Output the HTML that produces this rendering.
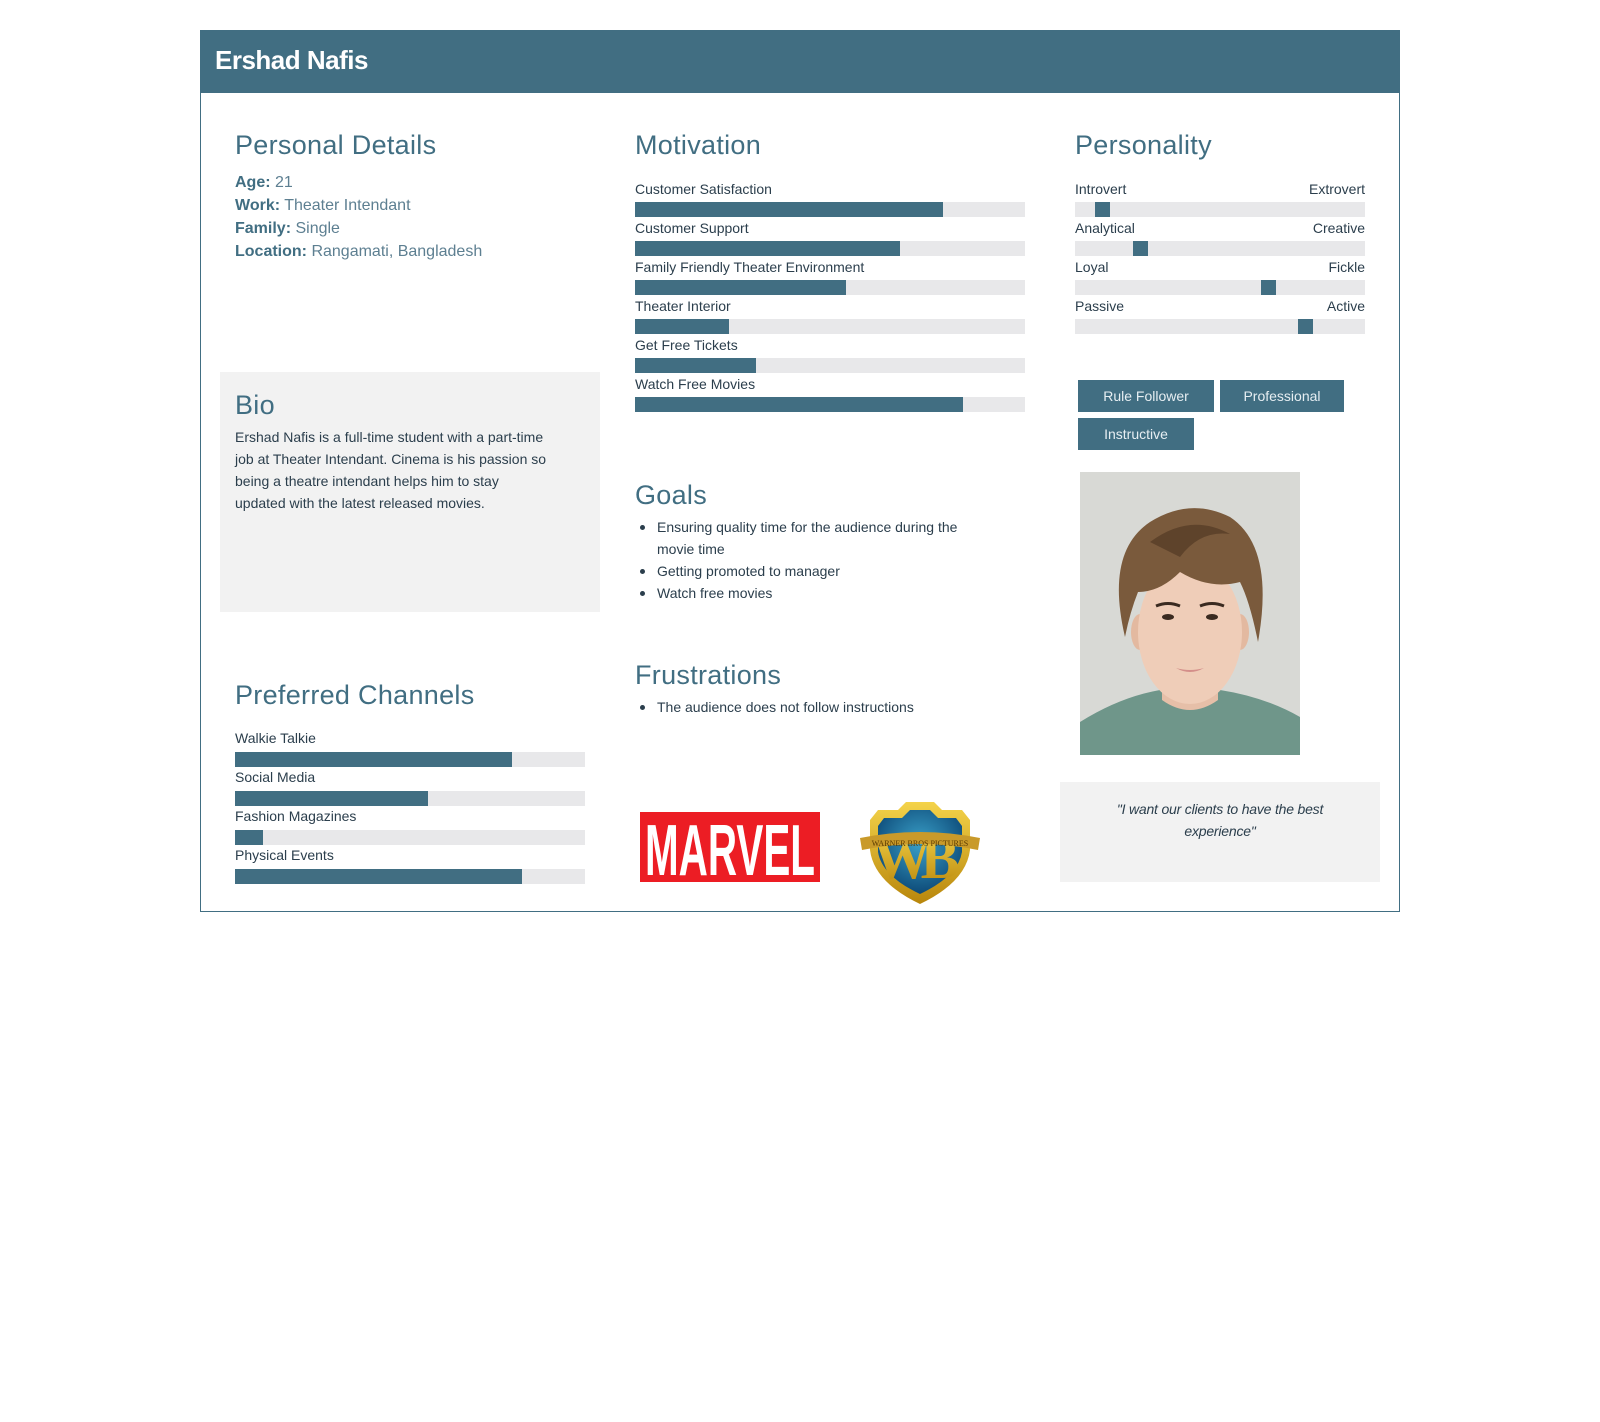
<!DOCTYPE html>
<html><head><meta charset="utf-8"><style>
*{margin:0;padding:0;box-sizing:border-box}
body{width:1600px;height:1422px;background:#fff;font-family:"Liberation Sans",sans-serif;color:#2b3e4c;position:relative;overflow:hidden}
.a{position:absolute}
.card{left:200px;top:30px;width:1200px;height:882px;border:1px solid #416e82}
.hdr{left:200px;top:30px;width:1200px;height:63px;background:#416e82;color:#fff;font-size:26px;font-weight:bold;padding:15px 0 0 15px;letter-spacing:-0.5px}
h2{position:absolute;font-weight:normal;color:#416e82;font-size:27px;letter-spacing:0.3px}
.pd{font-size:16px;line-height:23px;color:#5d7f91}
.pd b{color:#416e82;font-weight:bold}
.lbl{position:absolute;font-size:14px;color:#2b3e4c}
.bar{position:absolute;height:15px;background:#e8e8ea}
.bar i{position:absolute;left:0;top:0;height:15px;background:#416e82}
.gray{background:#f2f2f2}
.tag{position:absolute;background:#416e82;color:#e6eef2;font-size:14px;text-align:center;line-height:32px}
ul{position:absolute;font-size:14px;line-height:22px;list-style:none}
ul li{position:relative;padding-left:22px}
ul li:before{content:"";position:absolute;left:5px;top:9px;width:5px;height:5px;border-radius:50%;background:#2b3e4c}
</style></head><body>
<div class="a card"></div>
<div class="a hdr">Ershad Nafis</div>

<h2 style="left:235px;top:130px">Personal Details</h2>
<div class="a pd" style="left:235px;top:171px"><b>Age:</b> 21<br><b>Work:</b> Theater Intendant<br><b>Family:</b> Single<br><b>Location:</b> Rangamati, Bangladesh</div>

<div class="a gray" style="left:220px;top:372px;width:380px;height:240px"></div>
<h2 style="left:235px;top:390px">Bio</h2>
<div class="a" style="left:235px;top:426px;font-size:14px;line-height:22px;color:#2b3e4c;width:370px">Ershad Nafis is a full-time student with a part-time<br>job at Theater Intendant. Cinema is his passion so<br>being a theatre intendant helps him to stay<br>updated with the latest released movies.</div>

<h2 style="left:235px;top:680px">Preferred Channels</h2>
<div class="lbl" style="left:235px;top:730px">Walkie Talkie</div>
<div class="bar" style="left:235px;top:752px;width:350px"><i style="width:277px"></i></div>
<div class="lbl" style="left:235px;top:769px">Social Media</div>
<div class="bar" style="left:235px;top:791px;width:350px"><i style="width:193px"></i></div>
<div class="lbl" style="left:235px;top:808px">Fashion Magazines</div>
<div class="bar" style="left:235px;top:830px;width:350px"><i style="width:28px"></i></div>
<div class="lbl" style="left:235px;top:847px">Physical Events</div>
<div class="bar" style="left:235px;top:869px;width:350px"><i style="width:287px"></i></div>

<h2 style="left:635px;top:130px">Motivation</h2>
<div class="lbl" style="left:635px;top:181px">Customer Satisfaction</div>
<div class="bar" style="left:635px;top:202px;width:390px"><i style="width:308px"></i></div>
<div class="lbl" style="left:635px;top:220px">Customer Support</div>
<div class="bar" style="left:635px;top:241px;width:390px"><i style="width:265px"></i></div>
<div class="lbl" style="left:635px;top:259px">Family Friendly Theater Environment</div>
<div class="bar" style="left:635px;top:280px;width:390px"><i style="width:211px"></i></div>
<div class="lbl" style="left:635px;top:298px">Theater Interior</div>
<div class="bar" style="left:635px;top:319px;width:390px"><i style="width:94px"></i></div>
<div class="lbl" style="left:635px;top:337px">Get Free Tickets</div>
<div class="bar" style="left:635px;top:358px;width:390px"><i style="width:121px"></i></div>
<div class="lbl" style="left:635px;top:376px">Watch Free Movies</div>
<div class="bar" style="left:635px;top:397px;width:390px"><i style="width:328px"></i></div>

<h2 style="left:635px;top:480px">Goals</h2>
<ul style="left:635px;top:516px;width:345px"><li>Ensuring quality time for the audience during the movie time</li><li>Getting promoted to manager</li><li>Watch free movies</li></ul>
<h2 style="left:635px;top:660px">Frustrations</h2>
<ul style="left:635px;top:696px;width:390px"><li>The audience does not follow instructions</li></ul>

<svg class="a" style="left:640px;top:812px" width="180" height="70" viewBox="0 0 180 70">
<rect width="180" height="70" fill="#ec1d24"/>
<text x="90" y="63" text-anchor="middle" font-family="Liberation Sans" font-weight="bold" font-size="72" fill="#fff" textLength="170" lengthAdjust="spacingAndGlyphs">MARVEL</text>
</svg>
<svg class="a" style="left:858px;top:800px" width="124" height="104" viewBox="0 0 124 104">
<defs><linearGradient id="g" x1="0" y1="0" x2="0" y2="1"><stop offset="0" stop-color="#f4d34a"/><stop offset="1" stop-color="#b8860b"/></linearGradient>
<radialGradient id="b" cx=".5" cy=".4" r=".6"><stop offset="0" stop-color="#3aa0c8"/><stop offset="1" stop-color="#0d4a78"/></radialGradient></defs>
<path d="M20 10 L40 10 L48 2 L76 2 L84 10 L104 10 L112 20 L112 50 Q108 82 62 104 Q16 82 12 50 L12 20 Z" fill="url(#g)"/>
<path d="M26 18 L44 18 L52 10 L72 10 L80 18 L98 18 L104 26 L104 52 Q100 76 62 94 Q24 76 20 52 L20 26 Z" fill="url(#b)"/>
<text x="44" y="78" text-anchor="middle" font-family="Liberation Serif" font-weight="bold" font-size="58" fill="url(#g)">W</text>
<text x="82" y="78" text-anchor="middle" font-family="Liberation Serif" font-weight="bold" font-size="58" fill="url(#g)">B</text>
<path d="M2 38 Q62 26 122 38 L120 50 Q62 38 4 50 Z" fill="#c99a2a"/>
<text x="62" y="46" text-anchor="middle" font-family="Liberation Serif" font-size="8" fill="#5a3a00">WARNER BROS PICTURES</text>
</svg>

<h2 style="left:1075px;top:130px">Personality</h2>
<div class="lbl" style="left:1075px;top:181px">Introvert</div><div class="lbl" style="right:235px;top:181px">Extrovert</div>
<div class="bar" style="left:1075px;top:202px;width:290px"><i style="left:20px;width:15px"></i></div>
<div class="lbl" style="left:1075px;top:220px">Analytical</div><div class="lbl" style="right:235px;top:220px">Creative</div>
<div class="bar" style="left:1075px;top:241px;width:290px"><i style="left:58px;width:15px"></i></div>
<div class="lbl" style="left:1075px;top:259px">Loyal</div><div class="lbl" style="right:235px;top:259px">Fickle</div>
<div class="bar" style="left:1075px;top:280px;width:290px"><i style="left:186px;width:15px"></i></div>
<div class="lbl" style="left:1075px;top:298px">Passive</div><div class="lbl" style="right:235px;top:298px">Active</div>
<div class="bar" style="left:1075px;top:319px;width:290px"><i style="left:223px;width:15px"></i></div>

<div class="tag" style="left:1078px;top:380px;width:136px">Rule Follower</div>
<div class="tag" style="left:1220px;top:380px;width:124px">Professional</div>
<div class="tag" style="left:1078px;top:418px;width:116px">Instructive</div>

<svg class="a" style="left:1080px;top:472px" width="220" height="283" viewBox="0 0 220 283">
<rect width="220" height="283" fill="#d8d9d5"/>
<path d="M0 250 Q40 225 80 218 L140 218 Q185 225 220 245 L220 283 L0 283 Z" fill="#6f968a"/>
<path d="M82 200 L82 228 Q110 248 138 228 L138 200 Z" fill="#e6bfa8"/>
<ellipse cx="60" cy="160" rx="9" ry="18" fill="#e3b9a0"/>
<ellipse cx="160" cy="160" rx="9" ry="18" fill="#e3b9a0"/>
<ellipse cx="110" cy="160" rx="52" ry="72" fill="#efcdb8"/>
<path d="M45 165 Q25 80 70 50 Q110 25 150 45 Q195 75 178 170 Q170 130 160 110 Q130 118 100 100 Q80 120 58 120 Q50 140 45 165 Z" fill="#7a5a3c"/>
<path d="M70 70 Q110 40 150 62 Q120 58 100 85 Z" fill="#5e432b"/>
<path d="M76 134 Q88 129 100 134" stroke="#3a2a20" stroke-width="3" fill="none"/>
<path d="M120 134 Q132 129 144 134" stroke="#3a2a20" stroke-width="3" fill="none"/>
<ellipse cx="88" cy="145" rx="6" ry="3" fill="#3a2a20"/>
<ellipse cx="132" cy="145" rx="6" ry="3" fill="#3a2a20"/>
<path d="M96 196 Q110 200 124 196 Q110 204 96 196 Z" fill="#d48f8a"/>
</svg>

<div class="a gray" style="left:1060px;top:782px;width:320px;height:100px"></div>
<div class="a" style="left:1060px;top:798px;width:320px;text-align:center;font-size:14px;line-height:22px;font-style:italic;color:#2b3e4c;letter-spacing:-0.2px">"I want our clients to have the best<br>experience"</div>
</body></html>
